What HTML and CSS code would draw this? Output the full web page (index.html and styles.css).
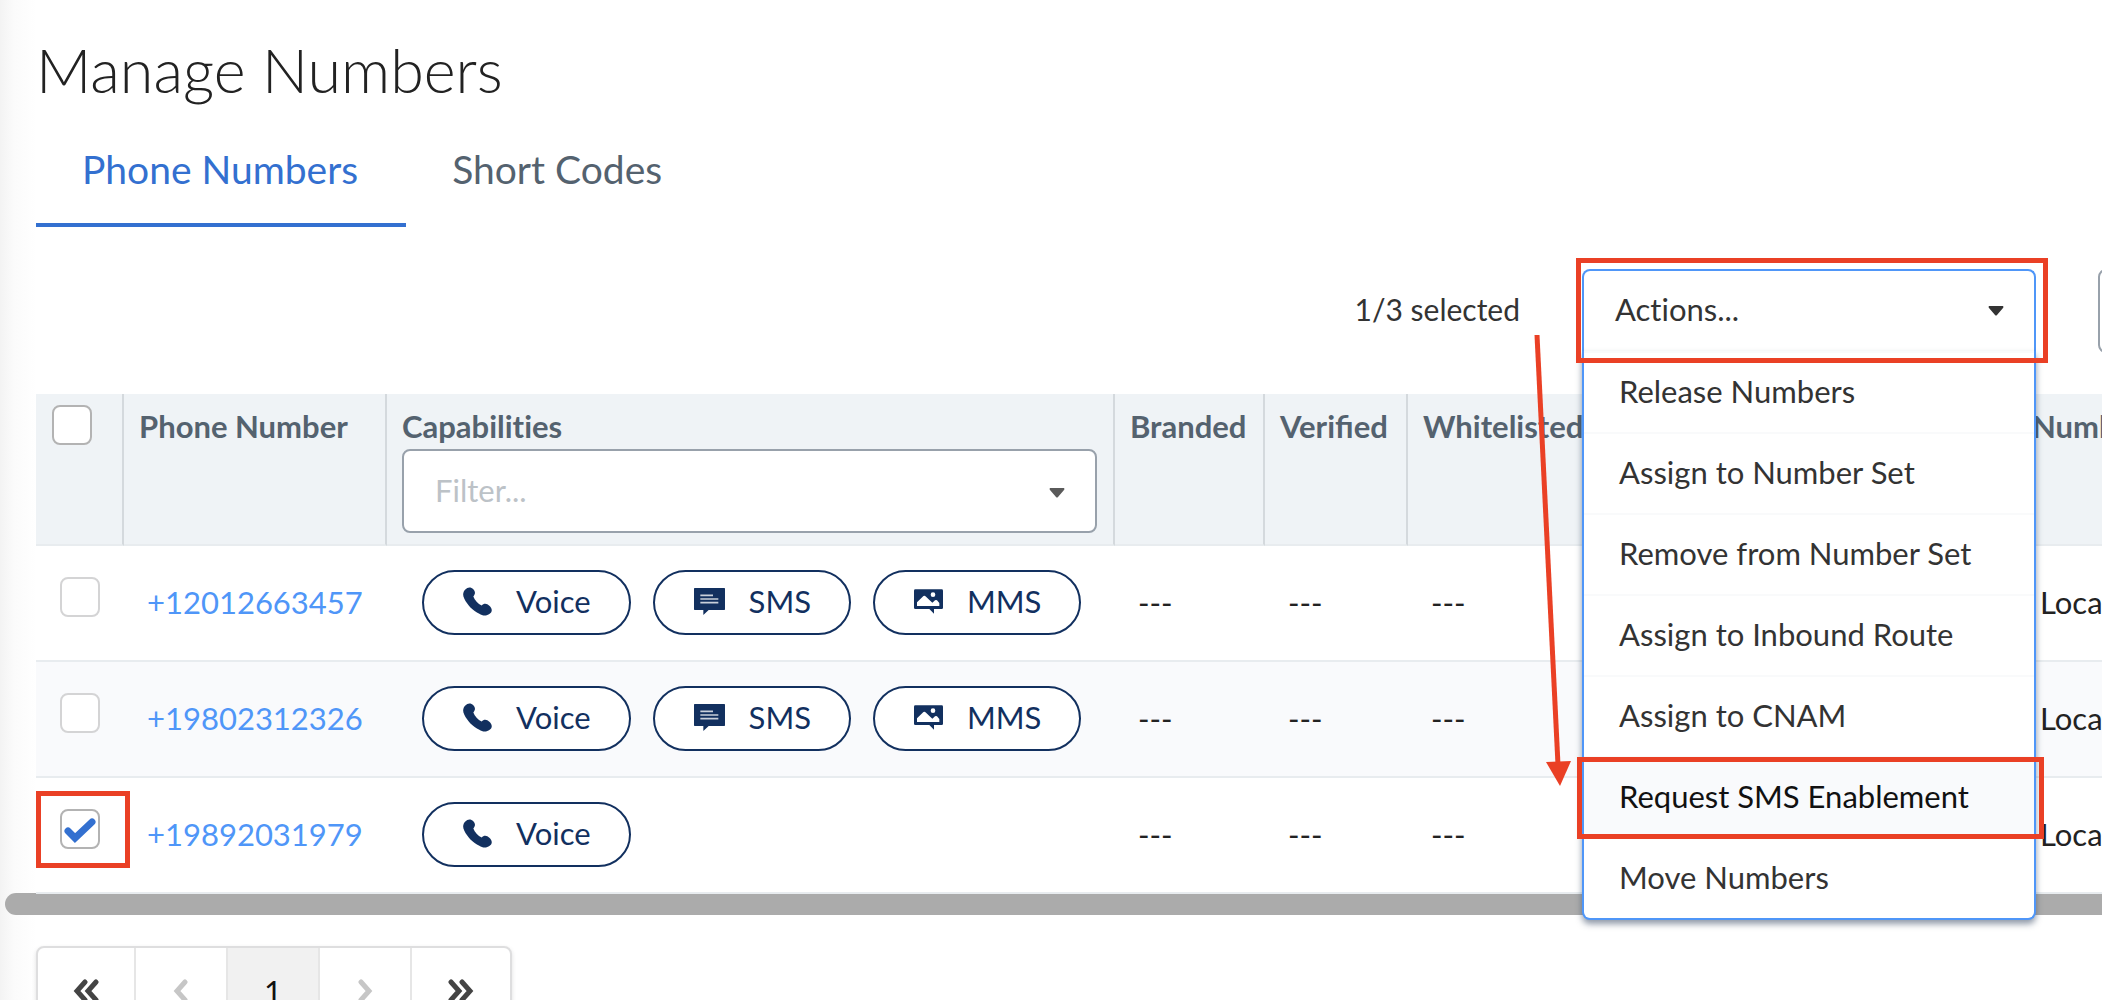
FILE: index.html
```html
<!DOCTYPE html>
<html lang="en">
<head>
    <meta charset="UTF-8">
    <meta name="viewport" content="width=device-width, initial-scale=1.0">
    <title>Manage Numbers</title>
    <link rel="stylesheet" href="styles.css">
</head>
<body>
    <!-- shared icons -->
    <svg class="sprite" aria-hidden="true">
        <symbol id="icon-phone" viewBox="0 0 87 86">
            <path d="M7 7C14-1 24-1 31 6C38 14 37 21 31 28C35 39 45 50 56 55C62 48 72 48 79 56C88 64 89 73 80 80C70 88 58 86 49 80C30 72 12 52 4 35C-2 24 0 14 7 7Z"/>
        </symbol>
        <symbol id="icon-sms" viewBox="0 0 93 81">
            <path d="M2 0H91Q93 0 93 2V64Q93 66 91 66H44L28 81V66H2Q0 66 0 64V2Q0 0 2 0Z"/>
            <path class="icon-lines" d="M19 22H57M19 33H73M19 44H73"/>
        </symbol>
        <symbol id="icon-mms" viewBox="0 0 87 73">
            <path fill-rule="evenodd" d="M4 0H83Q87 0 87 4V55Q87 59 83 59H60V73L46 59H4Q0 59 0 55V4Q0 0 4 0ZM9 50H76V41L69 33Q66 31 63 33L55 40L36 22Q31 17 26 22L9 39ZM57 9A7 7 0 1 0 57 23A7 7 0 1 0 57 9Z"/>
        </symbol>
        <symbol id="icon-caret" viewBox="0 0 16 10">
            <path d="M1 0H15Q16 1 15 2L9 9Q8 10 7 9L1 2Q0 1 1 0Z"/>
        </symbol>
    </svg>

    <main class="page">
        <h1 class="title">Manage Numbers</h1>

        <nav class="tabs">
            <a href="#phone-numbers" class="tab active">Phone Numbers</a>
            <a href="#short-codes" class="tab">Short Codes</a>
        </nav>

        <div class="toolbar">
            <span class="selected-count">1/3 selected</span>
            <div class="actions">
                <button type="button" class="actions-toggle" aria-expanded="true">
                    Actions...
                    <svg class="caret"><use href="#icon-caret"/></svg>
                </button>
                <div class="actions-menu">
                    <button type="button" class="item">Release Numbers</button>
                    <button type="button" class="item">Assign to Number Set</button>
                    <button type="button" class="item">Remove from Number Set</button>
                    <button type="button" class="item">Assign to Inbound Route</button>
                    <button type="button" class="item">Assign to CNAM</button>
                    <button type="button" class="item current">Request SMS Enablement<span class="mark mark-item"></span></button>
                    <button type="button" class="item">Move Numbers</button>
                </div>
                <span class="mark mark-actions"></span>
                <svg class="arrow" viewBox="0 0 40 460" aria-hidden="true">
                    <path class="arrow-line" d="M7 4L28 434"/>
                    <path class="arrow-head" d="M16 431L41 430L30 455Z"/>
                </svg>
            </div>
            <button type="button" class="more" aria-label="More options"></button>
        </div>

        <div class="table-wrap">
            <table class="numbers">
                <colgroup>
                    <col class="col-check">
                    <col class="col-phone">
                    <col class="col-capabilities">
                    <col class="col-branded">
                    <col class="col-verified">
                    <col class="col-whitelisted">
                    <col class="col-type">
                </colgroup>
                <thead>
                    <tr>
                        <th><input type="checkbox" class="check" aria-label="Select all"></th>
                        <th>Phone Number</th>
                        <th>
                            <label for="filter">Capabilities</label>
                            <div class="filter">
                                <select id="filter">
                                    <option>Filter...</option>
                                    <option>Voice</option>
                                    <option>SMS</option>
                                    <option>MMS</option>
                                </select>
                                <svg class="caret"><use href="#icon-caret"/></svg>
                            </div>
                        </th>
                        <th>Branded</th>
                        <th>Verified</th>
                        <th>Whitelisted</th>
                        <th>Number Type</th>
                    </tr>
                </thead>
                <tbody>
                    <tr>
                        <td class="check-cell"><input type="checkbox" class="check" aria-label="Select +12012663457"></td>
                        <td><a href="#12012663457">+12012663457</a></td>
                        <td class="pill-cell">
                            <div class="pills">
                                <span class="pill"><svg class="icon-phone"><use href="#icon-phone"/></svg>Voice</span>
                                <span class="pill"><svg class="icon-sms"><use href="#icon-sms"/></svg>SMS</span>
                                <span class="pill"><svg class="icon-mms"><use href="#icon-mms"/></svg>MMS</span>
                            </div>
                        </td>
                        <td>---</td>
                        <td>---</td>
                        <td>---</td>
                        <td>Local</td>
                    </tr>
                    <tr>
                        <td class="check-cell"><input type="checkbox" class="check" aria-label="Select +19802312326"></td>
                        <td><a href="#19802312326">+19802312326</a></td>
                        <td class="pill-cell">
                            <div class="pills">
                                <span class="pill"><svg class="icon-phone"><use href="#icon-phone"/></svg>Voice</span>
                                <span class="pill"><svg class="icon-sms"><use href="#icon-sms"/></svg>SMS</span>
                                <span class="pill"><svg class="icon-mms"><use href="#icon-mms"/></svg>MMS</span>
                            </div>
                        </td>
                        <td>---</td>
                        <td>---</td>
                        <td>---</td>
                        <td>Local</td>
                    </tr>
                    <tr>
                        <td class="check-cell"><input type="checkbox" class="check" aria-label="Select +19892031979" checked><span class="mark mark-check"></span></td>
                        <td><a href="#19892031979">+19892031979</a></td>
                        <td class="pill-cell">
                            <div class="pills">
                                <span class="pill"><svg class="icon-phone"><use href="#icon-phone"/></svg>Voice</span>
                            </div>
                        </td>
                        <td>---</td>
                        <td>---</td>
                        <td>---</td>
                        <td>Local</td>
                    </tr>
                </tbody>
            </table>
        </div>
        <div class="scrollbar"></div>

        <nav class="pagination" aria-label="Pagination">
            <button type="button" aria-label="First page"><svg viewBox="0 0 26 24"><path d="M12 3L4 12L12 21M23 3L15 12L23 21"/></svg></button>
            <button type="button" aria-label="Previous page" disabled><svg viewBox="0 0 26 24"><path d="M17 3L9 12L17 21"/></svg></button>
            <button type="button" class="current">1</button>
            <button type="button" aria-label="Next page" disabled><svg viewBox="0 0 26 24"><path d="M9 3L17 12L9 21"/></svg></button>
            <button type="button" aria-label="Last page"><svg viewBox="0 0 26 24"><path d="M3 3L11 12L3 21M14 3L22 12L14 21"/></svg></button>
        </nav>
    </main>
</body>
</html>
```
FILE: styles.css
```css
* {
    box-sizing: border-box;
}
body {
    margin: 0;
    height: 100vh;
    overflow: hidden;
    background: linear-gradient(to right, #f3f3f3 0, #fbfbfb 14px, #ffffff 36px);
    color: #222222;
    font-family: Lato, sans-serif;
    font-size: 31px;
    line-height: 40px;
}
button, select {
    font: inherit;
    color: inherit;
    margin: 0;
}
.sprite {
    position: absolute;
    width: 0;
    height: 0;
}
.page {
    padding: 34px 0 0 36px;
}

.title {
    margin: 0;
    font-size: 61px;
    font-weight: 300;
    line-height: 72px;
}

.tabs {
    display: flex;
    margin-top: 22px;
}
.tab {
    padding: 17px 48px 30px 46px;
    border-bottom: 4px solid transparent;
    color: #54626f;
    font-size: 39px;
    line-height: 48px;
    text-decoration: none;
}
.tab.active {
    color: #3370d0;
    border-bottom-color: #3370d0;
}

.toolbar {
    display: flex;
    justify-content: flex-end;
    align-items: center;
    height: 84px;
    margin-top: 42px;
    color: #333333;
}
.selected-count {
    margin-right: 62px;
    padding-bottom: 4px;
    font-size: 30px;
}
.actions {
    position: relative;
    width: 454px;
    margin-right: 62px;
}
.actions-toggle {
    display: flex;
    align-items: center;
    justify-content: space-between;
    width: 100%;
    height: 84px;
    padding: 0 30px 4px 31px;
    border: 2px solid #4f96f8;
    border-bottom-color: #f8f8f9;
    border-radius: 8px 8px 0 0;
    background: #ffffff;
    font-variant-ligatures: no-common-ligatures;
    text-align: left;
}
.caret {
    width: 16px;
    height: 10px;
    margin-top: 4px;
    fill: #333333;
}
.actions-menu {
    position: absolute;
    z-index: 2;
    top: 82px;
    left: 0;
    width: 100%;
    border: 2px solid #4f96f8;
    border-top: 0;
    border-radius: 0 0 8px 8px;
    background: #ffffff;
    box-shadow: 0 4px 6px rgba(34, 54, 84, 0.5);
}
.item {
    position: relative;
    display: block;
    width: 100%;
    height: 81px;
    padding: 0 35px 4px;
    border: 0;
    border-top: 2px solid #f9fafb;
    background: none;
    text-align: left;
}
.item.current {
    z-index: 1;
    background: #f9fafc;
    color: #111111;
}
.more {
    flex: none;
    width: 300px;
    height: 84px;
    margin-right: -296px;
    border: 2px solid #98a1ab;
    border-radius: 8px;
    background: #ffffff;
}

/* red callouts */
.mark {
    position: absolute;
    border: 5px solid #ea4025;
    pointer-events: none;
}
.mark-actions {
    z-index: 3;
    inset: -11px -12px -10px -6px;
}
.mark-item {
    inset: -1px -10px -2px -7px;
}
.mark-check {
    inset: 13px 0 24px;
    width: 94px;
}
.arrow {
    position: absolute;
    z-index: 1;
    top: 62px;
    left: -52px;
    width: 40px;
    height: 460px;
    overflow: visible;
}
.arrow-line {
    stroke: #ea4025;
    stroke-width: 5;
}
.arrow-head {
    fill: #ea4025;
}

.table-wrap {
    margin-top: 41px;
    overflow: hidden;
}
.numbers {
    width: 2300px;
    table-layout: fixed;
    border-collapse: separate;
    border-spacing: 0;
}
.col-check {
    width: 88px;
}
.col-phone {
    width: 263px;
}
.col-capabilities {
    width: 728px;
}
.col-branded {
    width: 150px;
}
.col-verified {
    width: 143px;
}
.col-whitelisted {
    width: 609px;
}
th {
    height: 152px;
    padding: 11px 16px 11px 15px;
    border-right: 2px solid #d4d9dd;
    border-bottom: 2px solid #e8ecef;
    background: #eff3f6;
    color: #54626f;
    font-weight: 700;
    line-height: 42px;
    text-align: left;
    vertical-align: top;
    white-space: nowrap;
}
th:first-child {
    padding-left: 16px;
}
th label {
    display: block;
    padding-bottom: 2px;
    font-variant-ligatures: no-common-ligatures;
}
td {
    position: relative;
    height: 116px;
    padding: 0 23px 2px;
    border-bottom: 2px solid #e8ecef;
}
tbody tr:nth-child(even) td {
    background: #f9fafc;
}
td a {
    color: #4f96f8;
    text-decoration: none;
}
.check {
    appearance: none;
    display: block;
    width: 40px;
    height: 40px;
    margin: 0;
    border: 2px solid #b3b3b3;
    border-radius: 8px;
    background: #ffffff;
}
.check-cell {
    padding: 31px 24px 0;
    vertical-align: top;
}
.check-cell .check {
    border-color: #d4d4d5;
}
.check-cell .check:checked {
    border-color: #b3b3b3;
    background: url("data:image/svg+xml,%3Csvg xmlns='http://www.w3.org/2000/svg' viewBox='0 0 36 36'%3E%3Cpath d='M6 20L13 27L30 11' fill='none' stroke='%233370d0' stroke-width='7' stroke-linecap='round'/%3E%3C/svg%3E") no-repeat center;
}

.filter {
    display: flex;
    align-items: center;
}
.filter select {
    appearance: none;
    width: 100%;
    height: 84px;
    padding: 0 31px 2px;
    border: 2px solid #98a1ab;
    border-radius: 8px;
    background: #ffffff;
    color: #bcc2c7;
    font-weight: 400;
}
.filter .caret {
    flex: none;
    margin-left: -48px;
    margin-right: 32px;
    fill: #5a5a5a;
    pointer-events: none;
}

.pill-cell {
    padding: 0 30px 2px 35px;
}
.pills {
    display: flex;
    gap: 22px;
}
.pill {
    display: flex;
    align-items: center;
    gap: 24px;
    height: 65px;
    padding: 0 38px 2px 39px;
    border: 2px solid #12305f;
    border-radius: 33px;
    background: #ffffff;
    color: #12305f;
}
.pill svg {
    flex: none;
    fill: #12305f;
}
.icon-phone {
    width: 29px;
    height: 29px;
}
.icon-sms {
    width: 31px;
    height: 27px;
}
.icon-mms {
    width: 29px;
    height: 25px;
}
.icon-lines {
    stroke: #c9d0da;
    stroke-width: 5;
}

.scrollbar {
    height: 22px;
    margin: -1px 0 0 -31px;
    border-radius: 11px 0 0 11px;
    background: #ababab;
}

.pagination {
    display: inline-flex;
    margin-top: 31px;
    border: 2px solid #dededf;
    border-radius: 8px;
    background: #ffffff;
    box-shadow: 0 2px 4px rgba(34, 36, 38, 0.15);
    overflow: hidden;
}
.pagination button {
    display: flex;
    align-items: center;
    justify-content: center;
    width: 92px;
    height: 88px;
    padding: 0 0 2px;
    border: 0;
    border-right: 2px solid #e6e6e6;
    background: none;
    color: #111111;
}
.pagination button:first-child {
    width: 98px;
}
.pagination button:last-child {
    width: 98px;
    border-right: 0;
}
.pagination .current {
    background: #f1f1f1;
}
.pagination svg {
    width: 26px;
    height: 24px;
    fill: none;
    stroke: #444444;
    stroke-width: 5;
    stroke-linecap: round;
}
.pagination button:disabled svg {
    stroke: #c6c6c6;
}
```
